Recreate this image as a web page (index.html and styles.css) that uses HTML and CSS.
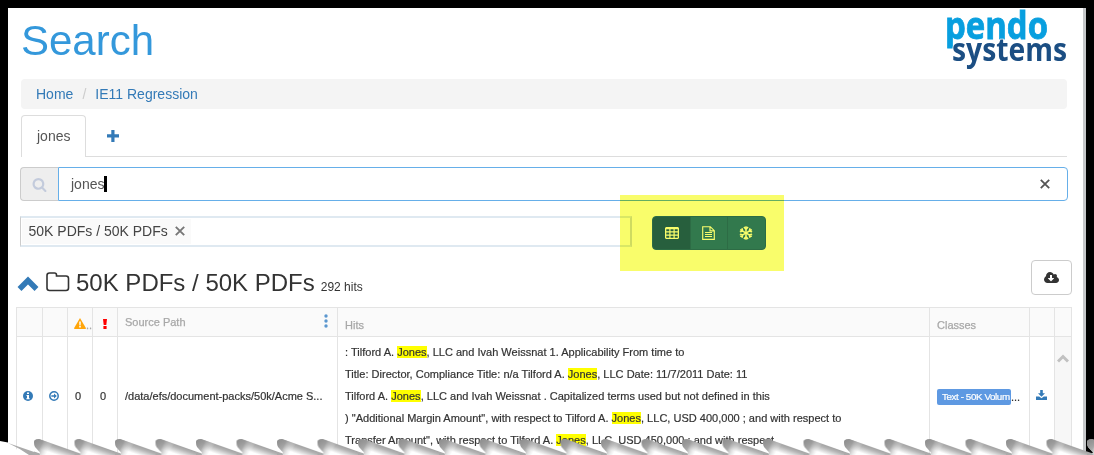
FILE: index.html
```
<!DOCTYPE html>
<html lang="en">
<head>
<meta charset="utf-8">
<title>Search</title>
<link rel="stylesheet" href="styles.css">
</head>
<body>
<main class="screen">
  <header class="top">
    <h1>Search</h1>
    <svg class="logo" viewBox="0 0 122 60" role="img" aria-label="pendo systems">
      <text x="-1" y="28.500" class="logo-a" textLength="103" lengthAdjust="spacingAndGlyphs">pendo</text>
      <text x="6" y="50.500" class="logo-b" textLength="115" lengthAdjust="spacingAndGlyphs">systems</text>
    </svg>
  </header>
  <nav class="crumbs"><a>Home</a><span>/</span><a>IE11 Regression</a></nav>
  <div class="tabs">
    <div class="tab">jones</div>
    <svg class="plus" viewBox="0 0 12 12"><path d="M4.3 0h3.2v4.3H12v3.2H7.5V12H4.3V7.5H0V4.3h4.3z"/></svg>
  </div>
  <div class="search">
    <div class="addon"><svg width="15" height="15" viewBox="0 0 1792 1792"><path d="M1216 832q0-185-131.5-316.5t-316.5-131.5-316.5 131.5-131.5 316.5 131.5 316.5 316.5 131.5 316.5-131.5 131.5-316.5zm512 832q0 52-38 90t-90 38q-54 0-90-38l-343-342q-179 124-399 124-143 0-273.5-55.5t-225-150-150-225-55.5-273.5 55.5-273.5 150-225 225-150 273.5-55.5 273.5 55.5 225 150 150 225 55.5 273.5q0 220-124 399l343 343q37 37 37 90z"/></svg></div>
    <div class="input"><span>jones</span><i class="caret"></i>
      <svg class="clear" viewBox="0 0 10 10"><path d="M.8.8l8.4 8.4M9.2.8L.8 9.2"/></svg></div>
  </div>
  <div class="filters">
    <div class="facet"><div class="chip"><span>50K PDFs / 50K PDFs</span><svg viewBox="0 0 10 10"><path d="M.8.8l8.4 8.4M9.2.8L.8 9.2"/></svg></div></div>
    <div class="views">
      <div class="view on"><svg width="14" height="12" viewBox="0 0 14 12"><path fill-rule="evenodd" d="M1 0h12l1 1v10l-1 1H1l-1-1V1zM1.3 2.2v2h3v-2zm4.2 0v2h3v-2zm4.2 0v2h3v-2zM1.3 5.4v2h3v-2zm4.2 0v2h3v-2zm4.2 0v2h3v-2zM1.3 8.7v2h3v-2zm4.2 0v2h3v-2zm4.2 0v2h3v-2z"/></svg></div>
      <div class="view doc"><svg width="13" height="14" viewBox="0 0 13 14"><path d="M.7.7h7.6l4 4v8.6H.7zM8 .7v4.200h4.300M3 6.500h7M3 8.500h7M3 10.500h7" fill="none" stroke="#fff" stroke-width="1.150"/></svg></div>
      <div class="view flake"><svg width="14" height="14" viewBox="-7 -7 14 14"><g fill="none" stroke="#fff" stroke-width="1.500"><g id="arm"><path d="M0-6.8V6.8M-2.1-5.9L0-3.7 2.1-5.9M-2.1 5.9L0 3.7 2.1 5.9"/></g><use href="#arm" transform="rotate(60)"/><use href="#arm" transform="rotate(120)"/></g></svg></div>
    </div>
    <div class="marker"></div>
  </div>
  <div class="group">
    <svg class="chev" viewBox="0 0 22 16"><path d="M2.500 13L11 4.500l8.500 8.500" fill="none" stroke="#337ab7" stroke-width="5.500"/></svg>
    <svg class="folder" viewBox="0 0 24 20"><path d="M3.5 1h5q2 0 2 2v1h9.5q2.5 0 2.5 2.5V16q0 2.500-2.500 2.500H3.500Q1 18.500 1 16V3.500Q1 1 3.500 1z" fill="none" stroke="#333" stroke-width="1.600"/></svg>
    <h2>50K PDFs / 50K PDFs</h2><small>292 hits</small>
    <div class="dl"><svg width="15" height="14" viewBox="0 0 1920 1792"><path d="M1280 928q0-14-9-23t-23-9h-224v-352q0-13-9.500-22.500t-22.500-9.500h-192q-13 0-22.500 9.500t-9.500 22.500v352h-224q-13 0-22.500 9.500t-9.500 22.500q0 14 9 23l352 352q9 9 23 9t23-9l351-351q10-12 10-24zm640 224q0 159-112.500 271.500t-271.500 112.500h-1088q-185 0-316.500-131.500t-131.500-316.500q0-130 70-240t188-165q-2-30-2-43 0-212 150-362t362-150q156 0 285.500 87t188.500 231q71-62 166-62 106 0 181 75t75 181q0 76-41 138 130 31 213.500 135.500t83.500 238.500z" fill="#333"/></svg></div>
  </div>
  <div class="grid">
    <div class="th"></div><div class="th"></div>
    <div class="th warn"><svg width="12" height="11" viewBox="0 0 12 11"><path d="M6 0l6 10.200-.5.800H.5L0 10.200z" fill="#ffa50a"/><path d="M5.200 3.400h1.600L6.600 7.400H5.400zM5.200 8.100h1.600v1.500H5.200z" fill="#fff"/></svg><span>..</span></div>
    <div class="th mid"><svg width="4" height="10" viewBox="0 0 4 10"><path d="M0 0h4L3.300 6H.7zM.4 7.100h3.200V10H.4z" fill="#f00"/></svg></div>
    <div class="th path"><span>Source Path</span><svg width="4" height="14" viewBox="0 0 4 14"><g fill="#5b97cf"><circle cx="2" cy="2" r="1.700"/><circle cx="2" cy="7" r="1.700"/><circle cx="2" cy="12" r="1.700"/></g></svg></div>
    <div class="th low">Hits</div><div class="th low">Classes</div><div class="th"></div><div class="th"></div>

    <div class="td mid info"><svg width="10" height="10" viewBox="0 0 10 10"><circle cx="5" cy="5" r="5" fill="#337ab7"/><path d="M4 1.500h2v1.600H4zM3.500 4H6v3.300h.7v1H3.300v-1H4V5h-.5z" fill="#fff"/></svg></div>
    <div class="td mid go"><svg width="10" height="10" viewBox="0 0 10 10"><circle cx="5" cy="5" r="4.200" fill="none" stroke="#337ab7" stroke-width="1.500"/><path d="M2.300 4.300H5V2.500L7.800 5 5 7.500V5.700H2.300z" fill="#337ab7"/></svg></div>
    <div class="td num">0</div><div class="td num">0</div>
    <div class="td src">/data/efs/document-packs/50k/Acme S...</div>
    <div class="td hits">
      <p>: Tilford A. <mark>Jones</mark>, LLC and Ivah Weissnat 1. Applicability From time to</p>
      <p>Title: Director, Compliance Title: n/a Tilford A. <mark>Jones</mark>, LLC Date: 11/7/2011 Date: 11</p>
      <p>Tilford A. <mark>Jones</mark>, LLC and Ivah Weissnat . Capitalized terms used but not defined in this</p>
      <p>) "Additional Margin Amount", with respect to Tilford A. <mark>Jones</mark>, LLC, USD 400,000 ; and with respect to</p>
      <p>Transfer Amount", with respect to Tilford A. <mark>Jones</mark>, LLC, USD 450,000 ; and with respect</p>
    </div>
    <div class="td cls"><b>Text - 50K Volum</b><span>...</span></div>
    <div class="td mid save"><svg width="11" height="10" viewBox="0 0 11 10"><path d="M4.200 0h2.600v3.300H9L5.500 6.800 2 3.300h2.200zM0 6.500h3.200l2.300 1.800 2.300-1.800H11V10H0z" fill="#337ab7"/></svg></div>
    <div class="td bar"><svg width="12" height="9" viewBox="0 0 12 9"><path d="M1 7.500l5-5 5 5" fill="none" stroke="#c1c1c1" stroke-width="3"/></svg></div>
  </div>
</main>
<svg class="tear" viewBox="0 0 1094 20">
  <defs>
    <linearGradient id="shade" gradientUnits="userSpaceOnUse" x1="20" y1="8" x2="15.500" y2="21">
      <stop offset="0" stop-color="#989898"/><stop offset=".3" stop-color="#b5b5b5"/><stop offset=".75" stop-color="#fff"/>
    </linearGradient>
    <linearGradient id="side" x1="0" x2="1" y1="0" y2=".4"><stop offset="0" stop-color="#8c8c8c"/><stop offset=".45" stop-color="#969696" stop-opacity=".8"/><stop offset="1" stop-color="#fff" stop-opacity="0"/></linearGradient>
    <pattern id="teeth" x="34" y="0" width="40.500" height="20" patternUnits="userSpaceOnUse">
      <path d="M0 16.600L6 18.500V20H0z" fill="#aaa"/>
      <path d="M0 7q0-2 2-2.500L5 4l35.500 12.600V20H6.500L5 18.500 6 17.500 1 12Q0 10 0 7z" fill="url(#shade)"/>
      <path d="M0 7q0-2 2-2.500L5 4l14 5L11 20H6.500L5 18.500 6 17.500 1 12Q0 10 0 7z" fill="url(#side)"/>
    </pattern>
  </defs>
  <path d="M0 6l8 1.500v4L34 20H0z" fill="#fff"/>
  <path d="M8 8L40 19V20H29Q19 13 8 8z" fill="#aaa"/>
  <rect x="34" width="1060" height="20" fill="url(#teeth)"/>
</svg>
</body>
</html>
```
FILE: styles.css
```
* { box-sizing: border-box; }
body { margin: 0; width: 1094px; height: 455px; overflow: hidden; position: relative; background: #000; padding: 8px 8px 0; font: 14px/20px "Liberation Sans", Arial, sans-serif; color: #333; }
svg { display: block; flex: none; }
h1, h2, p { margin: 0; font-weight: 400; }
.screen { height: 447px; background: #fff; border-right: 3px solid #c5c7c9; overflow: hidden; }
.top { display: flex; justify-content: space-between; height: 71px; padding: 2px 15px 0 13px; }
h1 { color: #3498db; font-size: 42px; line-height: 62px; }
.logo { width: 122px; height: 60px; overflow: visible; }
.logo text { font-family: "Open Sans", "Noto Sans", sans-serif; font-weight: 700; }
.logo-a { font-size: 37px; fill: #089fdf; stroke: #089fdf; stroke-width: .8px; }
.logo-b { font-size: 33px; fill: #1b4e83; stroke: #fff; stroke-width: 1.5px; paint-order: stroke; }
.crumbs { display: flex; align-items: center; height: 30px; margin: 0 16px 0 13px; padding-left: 15px; background: #f4f4f4; border-radius: 4px; color: #337ab7; }
.crumbs span { color: #ccc; width: 22px; text-align: center; }
.tabs { display: flex; height: 48px; margin: 0 16px 0 13px; padding-top: 6px; border-bottom: 1px solid #ddd; }
.tab { width: 65px; height: 42px; border: 1px solid #ddd; border-bottom: 0; border-radius: 4px 4px 0 0; background: #fff; padding: 10px 0 0 15px; color: #555; }
.plus { width: 12px; height: 12px; margin: 15px 0 0 21px; fill: #337ab7; }
.search { display: flex; height: 34px; margin: 10px 15px 0 12px; }
.addon { width: 38px; border: 1px solid #ccc; border-right: 0; border-radius: 4px 0 0 4px; background: #eee; display: grid; place-items: center; fill: #c3cbdc; }
.input { flex: 1; display: flex; align-items: center; border: 1px solid #66afe9; border-radius: 0 4px 4px 0; padding: 0 17px 0 12px; color: #555; }
.caret { width: 3px; height: 16px; background: #000; }
.clear { width: 10px; height: 10px; margin-left: auto; stroke: #555; stroke-width: 1.8; }
.filters { display: flex; position: relative; height: 50px; padding: 15px 0 0 12px; }
.facet { width: 612px; height: 31px; padding: 2px 1px; border: 2px solid #dfe9f1; border-width: 2px 2px 2px 1px; border-right-color: #d4dde5; border-left-color: #ccc; }
.chip { width: 169px; height: 25px; display: flex; align-items: center; gap: 7px; padding: 0 0 2px 6.500px; background: #fafafa; margin-top: -1px; white-space: nowrap; color: #444; }
.chip svg { width: 10px; height: 10px; stroke: #777; stroke-width: 1.9; }
.views { display: grid; grid-template-columns: 37px 37px 38px; width: 114px; height: 34px; margin-left: 20px; border: 1px solid #2e6da4; border-radius: 4px; overflow: hidden; background: #337ab7; fill: #fff; }
.view { display: grid; place-items: center; border-left: 1px solid #2e6da4; }
.view.on { background: #286090; border-left: 0; }
.doc { padding-right: 1px; }
.flake { padding-right: 2px; }
.marker { position: absolute; left: 612px; top: -6px; width: 164px; height: 76px; background: #f9fd6b; mix-blend-mode: multiply; }
.group { display: flex; align-items: flex-start; height: 56px; padding: 9px 11px 0 9px; }
.chev { width: 22px; height: 16px; margin-top: 16px; }
.folder { width: 24px; height: 20px; margin: 12px 0 0 7px; }
h2 { font-size: 24px; line-height: 30px; margin: 8px 0 0 6px; white-space: nowrap; }
small { font-size: 12px; margin: 17px 0 0 6px; }
.dl { width: 41px; height: 35px; margin-left: auto; border: 1px solid #ccc; border-radius: 4px; display: grid; place-items: center; }
.grid { display: grid; grid-template-columns: 26px 25px 25px 25px 220px 592px 100px 25px 17px; grid-template-rows: 29px 130px; width: 1056px; margin-left: 8px; border: solid #e4e4e4; border-width: 1px 0 0 1px; font-size: 11px; line-height: 22px; }
.th, .td { border-right: 1px solid #e4e4e4; white-space: nowrap; min-width: 0; }
.th { background: #fafafa; border-bottom: 1px solid #e4e4e4; color: #a8a8a8; display: flex; -webkit-text-stroke: .25px; }
.low { padding: 6px 0 0 7px; }
.warn { padding: 10px 0 0 6px; }
.warn span { line-height: 14px; }
.mid { display: flex; justify-content: center; }
.th.mid { padding-top: 11px; }
.path { justify-content: space-between; padding: 3px 9px 0 7px; }
.path svg { margin-top: 3px; }
.td { padding-top: 48px; -webkit-text-stroke: .2px; }
.td.mid { padding-top: 54px; }
.td.info { padding-right: 3px; }
.td.go { padding-right: 2px; }
.td.save { padding-top: 53px; padding-right: 1px; }
.num, .src { padding-left: 7px; }
.hits { padding: 4px 0 0 7px; letter-spacing: .013px; }
mark { background: #ff0; color: inherit; }
.cls { display: flex; padding: 52px 0 0 7px; }
.cls b { width: 74px; height: 16px; line-height: 16px; padding-left: 5px; border-radius: 2px; background: #5e99e2; color: #fff; font-weight: 400; font-size: 9.8px; letter-spacing: -.4px; }
.cls span { line-height: 16px; }
.bar { background: #f7f7f7; padding: 17px 0 0 2px; }
.tear { position: absolute; left: 0; top: 435px; width: 1094px; height: 20px; }
```
